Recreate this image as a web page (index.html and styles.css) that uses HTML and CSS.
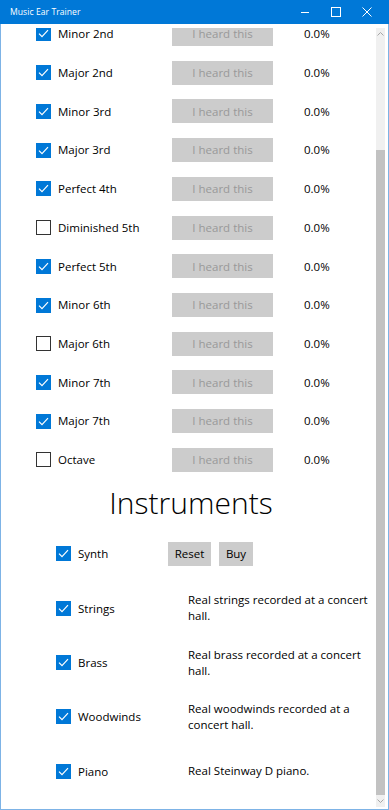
FILE: index.html
```html
<!DOCTYPE html>
<html>
<head>
<meta charset="utf-8">
<title>Music Ear Trainer</title>
<link rel="stylesheet" href="styles.css">
</head>
<body>
<div class="titlebar">
  <span class="title">Music Ear Trainer</span>
  <div class="caption">
    <svg class="cap-btn" width="10" height="10" viewBox="0 0 10 10"><line x1="1" y1="5.5" x2="9" y2="5.5" stroke="#fff" stroke-width="1"/></svg>
    <svg class="cap-btn" width="10" height="10" viewBox="0 0 10 10"><rect x="0.5" y="0.5" width="9" height="9" fill="none" stroke="#fff" stroke-width="1"/></svg>
    <svg class="cap-btn" width="10" height="10" viewBox="0 0 10 10"><path d="M0.5 0.5 L9.5 9.5 M9.5 0.5 L0.5 9.5" stroke="#fff" stroke-width="1"/></svg>
  </div>
</div>
<div class="client">
  <div class="viewport">
    <div class="scroller">
      <div class="intervals">
        <div class="irow"><span class="cb on"><svg viewBox="0 0 15 15"><polyline points="3,7.6 6,10.6 12,4.2"/></svg></span><span class="ilabel">Minor 2nd</span><span class="heard"><span class="ht">I heard this</span></span><span class="pct">0.0%</span></div>
        <div class="irow"><span class="cb on"><svg viewBox="0 0 15 15"><polyline points="3,7.6 6,10.6 12,4.2"/></svg></span><span class="ilabel">Major 2nd</span><span class="heard"><span class="ht">I heard this</span></span><span class="pct">0.0%</span></div>
        <div class="irow"><span class="cb on"><svg viewBox="0 0 15 15"><polyline points="3,7.6 6,10.6 12,4.2"/></svg></span><span class="ilabel">Minor 3rd</span><span class="heard"><span class="ht">I heard this</span></span><span class="pct">0.0%</span></div>
        <div class="irow"><span class="cb on"><svg viewBox="0 0 15 15"><polyline points="3,7.6 6,10.6 12,4.2"/></svg></span><span class="ilabel">Major 3rd</span><span class="heard"><span class="ht">I heard this</span></span><span class="pct">0.0%</span></div>
        <div class="irow"><span class="cb on"><svg viewBox="0 0 15 15"><polyline points="3,7.6 6,10.6 12,4.2"/></svg></span><span class="ilabel">Perfect 4th</span><span class="heard"><span class="ht">I heard this</span></span><span class="pct">0.0%</span></div>
        <div class="irow"><span class="cb"></span><span class="ilabel">Diminished 5th</span><span class="heard"><span class="ht">I heard this</span></span><span class="pct">0.0%</span></div>
        <div class="irow"><span class="cb on"><svg viewBox="0 0 15 15"><polyline points="3,7.6 6,10.6 12,4.2"/></svg></span><span class="ilabel">Perfect 5th</span><span class="heard"><span class="ht">I heard this</span></span><span class="pct">0.0%</span></div>
        <div class="irow"><span class="cb on"><svg viewBox="0 0 15 15"><polyline points="3,7.6 6,10.6 12,4.2"/></svg></span><span class="ilabel">Minor 6th</span><span class="heard"><span class="ht">I heard this</span></span><span class="pct">0.0%</span></div>
        <div class="irow"><span class="cb"></span><span class="ilabel">Major 6th</span><span class="heard"><span class="ht">I heard this</span></span><span class="pct">0.0%</span></div>
        <div class="irow"><span class="cb on"><svg viewBox="0 0 15 15"><polyline points="3,7.6 6,10.6 12,4.2"/></svg></span><span class="ilabel">Minor 7th</span><span class="heard"><span class="ht">I heard this</span></span><span class="pct">0.0%</span></div>
        <div class="irow"><span class="cb on"><svg viewBox="0 0 15 15"><polyline points="3,7.6 6,10.6 12,4.2"/></svg></span><span class="ilabel">Major 7th</span><span class="heard"><span class="ht">I heard this</span></span><span class="pct">0.0%</span></div>
        <div class="irow"><span class="cb"></span><span class="ilabel">Octave</span><span class="heard"><span class="ht">I heard this</span></span><span class="pct">0.0%</span></div>
      </div>
      <h2 class="heading">Instruments</h2>
      <div class="instruments">
        <div class="nrow"><span class="cb on"><svg viewBox="0 0 15 15"><polyline points="3,7.6 6,10.6 12,4.2"/></svg></span><span class="nlabel">Synth</span><div class="actions"><span class="btn reset">Reset</span><span class="btn buy">Buy</span></div></div>
        <div class="nrow"><span class="cb on"><svg viewBox="0 0 15 15"><polyline points="3,7.6 6,10.6 12,4.2"/></svg></span><span class="nlabel">Strings</span><p class="desc">Real strings recorded at a concert hall.</p></div>
        <div class="nrow"><span class="cb on"><svg viewBox="0 0 15 15"><polyline points="3,7.6 6,10.6 12,4.2"/></svg></span><span class="nlabel">Brass</span><p class="desc">Real brass recorded at a concert hall.</p></div>
        <div class="nrow"><span class="cb on"><svg viewBox="0 0 15 15"><polyline points="3,7.6 6,10.6 12,4.2"/></svg></span><span class="nlabel">Woodwinds</span><p class="desc">Real woodwinds recorded at a concert hall.</p></div>
        <div class="nrow"><span class="cb on"><svg viewBox="0 0 15 15"><polyline points="3,7.6 6,10.6 12,4.2"/></svg></span><span class="nlabel">Piano</span><p class="desc">Real Steinway D piano.</p></div>
      </div>
    </div>
  </div>
  <div class="scrollbar">
    <svg class="arrow" width="9" height="6" viewBox="0 0 9 6"><polyline points="1.5,4.5 4.5,1.5 7.5,4.5" fill="none" stroke="#a6a6a6" stroke-width="1"/></svg>
    <div class="thumb"></div>
    <svg class="arrow" width="9" height="6" viewBox="0 0 9 6"><polyline points="1.5,1.5 4.5,4.5 7.5,1.5" fill="none" stroke="#a6a6a6" stroke-width="1"/></svg>
  </div>
</div>
</body>
</html>
```
FILE: styles.css
```css
html, body {
  margin: 0;
  padding: 0;
  width: 389px;
  height: 810px;
  overflow: hidden;
  background: #ffffff;
  font-family: "Open Sans", "Noto Sans", sans-serif;
  color: #000;
}

.titlebar {
  height: 24px;
  background: #0078d7;
  color: #fff;
  display: flex;
  align-items: center;
  justify-content: space-between;
}

.title {
  font-size: 8.6px;
  padding-left: 10px;
  letter-spacing: 0.05px;
}

.caption {
  display: flex;
  align-items: center;
  gap: 21px;
  padding-right: 17px;
}

.cap-btn {
  display: block;
}

.client {
  height: 786px;
  box-sizing: border-box;
  border: 1px solid #7db3e6;
  border-top: none;
  display: flex;
}

.viewport {
  flex: 1;
  margin-top: 4px;
  overflow: hidden;
}

.scroller {
  margin-top: -13.4px;
}

.intervals {
  display: flex;
  flex-direction: column;
}

.irow {
  height: 38.73px;
  display: flex;
  align-items: center;
  padding-left: 35px;
}

.cb {
  width: 15px;
  height: 15px;
  box-sizing: border-box;
  border: 1.5px solid #333333;
  background: #fff;
  flex: none;
  display: block;
}

.cb.on {
  border: none;
  background: #0078d7;
}

.cb svg {
  display: block;
  width: 15px;
  height: 15px;
}

.cb polyline {
  fill: none;
  stroke: #fff;
  stroke-width: 1.2;
}

.ilabel {
  width: 114px;
  margin-left: 7px;
  font-size: 11.5px;
  line-height: 1;
  white-space: nowrap;
}

.heard {
  width: 101px;
  height: 24px;
  background: #cccccc;
  color: #999999;
  font-size: 11.5px;
  display: flex;
  align-items: center;
  justify-content: center;
}

.ht {
  line-height: 1;
}

.pct {
  margin-left: 31px;
  font-size: 11.5px;
  line-height: 1;
}

.heading {
  margin: 0;
  height: 47.4px;
  line-height: 47.4px;
  text-align: center;
  font-size: 30px;
  font-weight: 300;
  padding-left: 5px;
}

.instruments {
  display: flex;
  flex-direction: column;
}

.nrow {
  height: 54.4px;
  display: flex;
  align-items: center;
  padding-left: 55px;
}

.nlabel {
  width: 90px;
  margin-left: 7px;
  font-size: 11.5px;
}

.actions {
  display: flex;
  gap: 8px;
}

.btn {
  height: 24px;
  background: #cccccc;
  font-size: 11.5px;
  display: flex;
  align-items: center;
  justify-content: center;
}

.reset { width: 43px; }
.buy { width: 34px; }

.desc {
  margin: 0 0 0 20px;
  width: 180px;
  font-size: 11.5px;
  line-height: 16px;
}

.scrollbar {
  width: 9px;
  margin: 4px 3px 2px 0;
  background: #f0f0f0;
  display: flex;
  flex-direction: column;
  align-items: center;
}

.arrow {
  display: block;
  margin-top: 3px;
  flex: none;
}

.thumb {
  width: 9px;
  height: 645px;
  margin-top: 113px;
  background: #c2c2c2;
}

.scrollbar .arrow:last-child {
  margin-top: 3px;
}
```
